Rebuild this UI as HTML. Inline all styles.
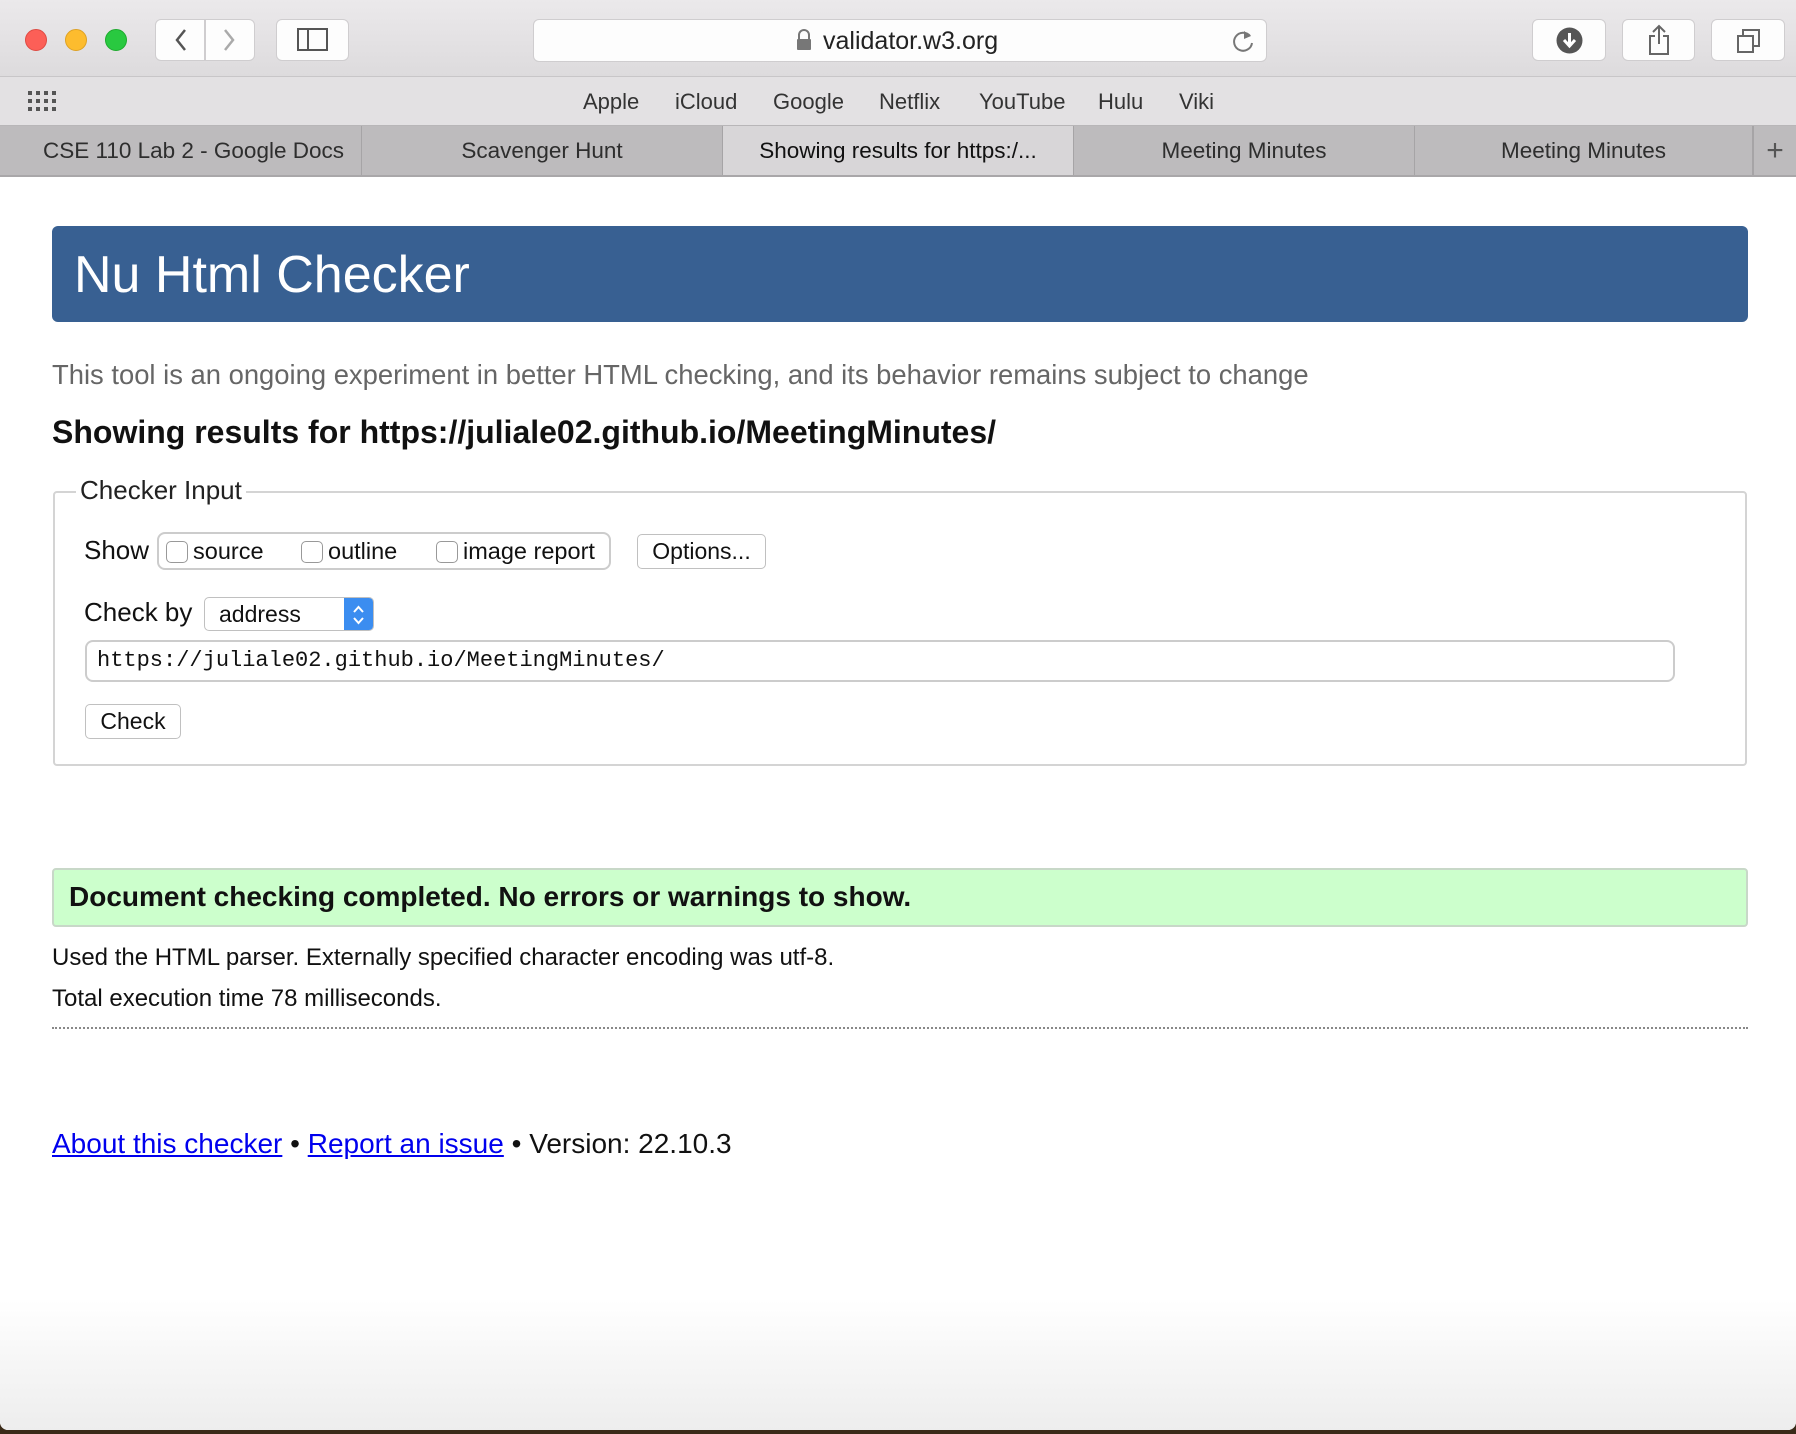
<!DOCTYPE html>
<html><head><meta charset="utf-8"><style>
*{box-sizing:border-box;margin:0;padding:0}
body{width:1796px;height:1434px;overflow:hidden;font-family:"Liberation Sans",Arial,sans-serif;background:#3a2a18;position:relative}
.a{position:absolute}
.win{left:0;top:0;width:1796px;height:1430px;background:#fff;border-radius:0 0 8px 8px;overflow:hidden}
.tb{left:0;top:0;width:1796px;height:77px;background:linear-gradient(#ebe9eb,#dddbdd);border-bottom:1px solid #c8c6c8}
.bm{left:0;top:77px;width:1796px;height:49px;background:#e3e1e3;border-bottom:1px solid #b8b6b8}
.tabs{left:0;top:126px;width:1796px;height:51px;background:#bdbbbd;border-bottom:2px solid #a9a7a9}
.tab{position:absolute;top:0;height:49px;border-right:1px solid #a6a4a6;font-size:22.5px;color:#2e2e2e;text-align:center;line-height:49px;white-space:nowrap}
.btn{background:#fdfdfd;border:1px solid #cfcdcf;border-radius:6px}
.dot{width:22px;height:22px;border-radius:50%;top:29px}
.bml{top:89px;font-size:22px;color:#333}
.b2{background:#fff;border:1px solid #c0c0c0;border-radius:5px;font-size:23px;color:#111}
.cb{width:22px;height:22px;border:1px solid #999;border-radius:5px;background:#fff;top:541px}
</style></head><body>
<div class="a win">
<div class="a tb"></div>
<div class="a dot" style="left:25px;background:#fc5f57;border:1px solid #de4a42"></div>
<div class="a dot" style="left:65px;background:#fdbc2e;border:1px solid #dea123"></div>
<div class="a dot" style="left:105px;background:#29c940;border:1px solid #1daa2d"></div>
<div class="a btn" style="left:155px;top:19px;width:50px;height:42px;border-radius:6px 0 0 6px"></div>
<div class="a btn" style="left:205px;top:19px;width:50px;height:42px;border-radius:0 6px 6px 0"></div>
<svg class="a" style="left:165px;top:25px" width="80" height="30"><path d="M20 5 L12 15 L20 25" stroke="#555" stroke-width="2.5" fill="none"/><path d="M60 5 L68 15 L60 25" stroke="#aaa" stroke-width="2.5" fill="none"/></svg>
<div class="a btn" style="left:276px;top:19px;width:73px;height:42px"></div>
<svg class="a" style="left:297px;top:28px" width="32" height="24"><rect x="1" y="1" width="29" height="21" fill="none" stroke="#555" stroke-width="2"/><line x1="11" y1="1" x2="11" y2="22" stroke="#555" stroke-width="2"/></svg>
<div class="a btn" style="left:533px;top:19px;width:734px;height:43px"></div>
<svg class="a" style="left:796px;top:29px" width="16" height="22"><path d="M3 10 V6 a5 5 0 0 1 10 0 V10" stroke="#777" stroke-width="2" fill="none"/><rect x="1" y="10" width="14" height="11" rx="1" fill="#777"/></svg>
<div class="a" style="left:823px;top:27px;font-size:25px;color:#222">validator.w3.org</div>
<svg class="a" style="left:1230px;top:28px" width="26" height="26"><path d="M20 8 A9 9 0 1 0 22 15" stroke="#777" stroke-width="2" fill="none"/><path d="M14 3 L21 8 L14 11" fill="#777"/></svg>
<div class="a btn" style="left:1532px;top:19px;width:74px;height:42px"></div>
<svg class="a" style="left:1556px;top:27px" width="27" height="27"><circle cx="13.5" cy="13.5" r="13" fill="#555"/><path d="M13.5 6 V18 M8 13 L13.5 19 L19 13" stroke="#fff" stroke-width="3" fill="none"/></svg>
<div class="a btn" style="left:1622px;top:19px;width:73px;height:42px"></div>
<svg class="a" style="left:1647px;top:24px" width="24" height="32"><path d="M8 12 H3 V30 H21 V12 H16" stroke="#666" stroke-width="2" fill="none"/><path d="M12 2 V20 M6 8 L12 2 L18 8" stroke="#666" stroke-width="2" fill="none"/></svg>
<div class="a btn" style="left:1711px;top:19px;width:74px;height:42px"></div>
<svg class="a" style="left:1736px;top:28px" width="26" height="26"><rect x="2" y="8" width="15" height="16" fill="none" stroke="#666" stroke-width="2"/><path d="M7 8 V2 H23 V18 H17" stroke="#666" stroke-width="2" fill="none"/></svg>
<div class="a bm"></div>
<svg class="a" style="left:28px;top:91px" width="30" height="20"><g fill="#555"><rect x="0" y="0" width="4" height="4"/><rect x="8" y="0" width="4" height="4"/><rect x="16" y="0" width="4" height="4"/><rect x="24" y="0" width="4" height="4"/><rect x="0" y="8" width="4" height="4"/><rect x="8" y="8" width="4" height="4"/><rect x="16" y="8" width="4" height="4"/><rect x="24" y="8" width="4" height="4"/><rect x="0" y="16" width="4" height="4"/><rect x="8" y="16" width="4" height="4"/><rect x="16" y="16" width="4" height="4"/><rect x="24" y="16" width="4" height="4"/></g></svg>
<div class="a bml" style="left:583px">Apple</div><div class="a bml" style="left:675px">iCloud</div><div class="a bml" style="left:773px">Google</div><div class="a bml" style="left:879px">Netflix</div><div class="a bml" style="left:979px">YouTube</div><div class="a bml" style="left:1098px">Hulu</div><div class="a bml" style="left:1179px">Viki</div>
<div class="a tabs">
<div class="tab" style="left:0;width:362px;padding-left:26px">CSE 110 Lab 2 - Google Docs</div>
<div class="tab" style="left:362px;width:361px">Scavenger Hunt</div>
<div class="tab" style="left:723px;width:351px;background:#d8d6d8;color:#111">Showing results for https:/...</div>
<div class="tab" style="left:1074px;width:341px">Meeting Minutes</div>
<div class="tab" style="left:1415px;width:338px">Meeting Minutes</div>
<div class="tab" style="left:1753px;width:43px;border:none;border-left:1px solid #a6a4a6;font-size:30px;color:#555">+</div>
</div>
<div class="a" style="left:52px;top:226px;width:1696px;height:96px;background:#386092;border-radius:6px"></div>
<div class="a" style="left:74px;top:245px;font-size:52px;color:#fff">Nu Html Checker</div>
<div class="a" style="left:52px;top:359px;font-size:27.4px;color:#666">This tool is an ongoing experiment in better HTML checking, and its behavior remains subject to change</div>
<div class="a" style="left:52px;top:414px;font-size:32px;font-weight:bold;color:#111">Showing results for https://juliale02.github.io/MeetingMinutes/</div>
<div class="a" style="left:53px;top:491px;width:1694px;height:275px;border:2px solid #d4d4d4;border-radius:4px"></div>
<div class="a" style="left:76px;top:475px;background:#fff;padding:0 4px;font-size:26px;color:#222">Checker Input</div>
<div class="a" style="left:84px;top:535px;font-size:26px;color:#111">Show</div>
<div class="a" style="left:157px;top:532px;width:454px;height:38px;border:2px solid #ccc;border-radius:8px"></div>
<div class="a cb" style="left:166px"></div><div class="a" style="left:193px;top:538px;font-size:23.5px;color:#111">source</div>
<div class="a cb" style="left:301px"></div><div class="a" style="left:328px;top:538px;font-size:23.5px;color:#111">outline</div>
<div class="a cb" style="left:436px"></div><div class="a" style="left:463px;top:538px;font-size:23.5px;color:#111">image report</div>
<div class="a b2" style="left:637px;top:534px;width:129px;height:35px;text-align:center;line-height:33px">Options...</div>
<div class="a" style="left:84px;top:597px;font-size:26px;color:#111">Check by</div>
<div class="a b2" style="left:204px;top:597px;width:170px;height:34px;padding-left:14px;line-height:32px;overflow:hidden">address<div class="a" style="right:0;top:0;width:29px;height:34px;background:#3b8df0"></div><svg class="a" style="right:8px;top:7px" width="13" height="20"><path d="M2 7 L6.5 2 L11 7 M2 13 L6.5 18 L11 13" stroke="#fff" stroke-width="2" fill="none"/></svg></div>
<div class="a" style="left:85px;top:640px;width:1590px;height:42px;border:2px solid #ccc;border-radius:8px;font-family:'Liberation Mono',monospace;font-size:22px;padding-left:10px;line-height:38px;color:#111">https://juliale02.github.io/MeetingMinutes/</div>
<div class="a b2" style="left:85px;top:704px;width:96px;height:35px;text-align:center;line-height:33px">Check</div>
<div class="a" style="left:52px;top:868px;width:1696px;height:59px;background:#ccffcc;border:2px solid #c8d8c8;border-radius:4px"></div>
<div class="a" style="left:69px;top:881px;font-size:28px;font-weight:bold;color:#111">Document checking completed. No errors or warnings to show.</div>
<div class="a" style="left:52px;top:944px;font-size:24px;color:#111">Used the HTML parser. Externally specified character encoding was utf-8.</div>
<div class="a" style="left:52px;top:985px;font-size:24px;color:#111">Total execution time 78 milliseconds.</div>
<div class="a" style="left:52px;top:1027px;width:1696px;border-top:2px dotted #888"></div>
<div class="a" style="left:52px;top:1128px;font-size:28px;color:#111"><span style="color:#0000ee;text-decoration:underline">About this checker</span> • <span style="color:#0000ee;text-decoration:underline">Report an issue</span> • Version: 22.10.3</div>
<div class="a" style="left:0;top:1300px;width:1796px;height:130px;background:linear-gradient(#fff,#ededed)"></div>
</div>
</body></html>
